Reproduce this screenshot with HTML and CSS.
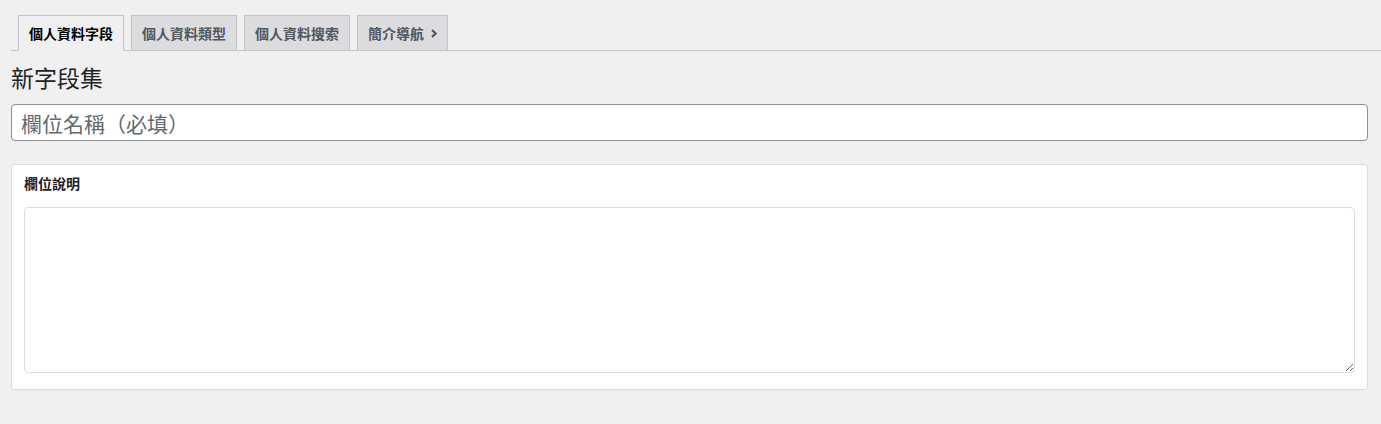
FILE: index.html
```html
<!DOCTYPE html>
<html lang="zh-Hant">
<head>
<meta charset="utf-8">
<title>新字段集</title>
<link rel="stylesheet" href="styles.css">
</head>
<body>
<div class="wrap">
  <nav class="tabs">
    <a class="tab tab-active" href="#">個人資料字段</a>
    <a class="tab" href="#">個人資料類型</a>
    <a class="tab" href="#">個人資料搜索</a>
    <a class="tab" href="#">簡介導航<svg class="chev" width="6" height="9" viewBox="0 0 6 9" aria-hidden="true"><path d="M1 1 L4.6 4.5 L1 8" fill="none" stroke="currentColor" stroke-width="2.2"/></svg></a>
  </nav>
  <h1 class="title">新字段集</h1>
  <input class="name-input" type="text" placeholder="欄位名稱（必填）">
  <div class="panel">
    <div class="panel-label">欄位說明</div>
    <textarea class="desc"></textarea>
  </div>
</div>
</body>
</html>
```
FILE: styles.css
```css
html, body {
  margin: 0;
  padding: 0;
  background: #f0f0f1;
  font-family: "Noto Sans CJK TC", "Noto Sans", "Liberation Sans", sans-serif;
  color: #1d2327;
}

.wrap {
  padding: 0 13px 0 11px;
}

.tabs {
  display: flex;
  align-items: flex-end;
  margin-right: -13px;
  padding-top: 15px;
  border-bottom: 1px solid #c3c4c7;
}

.tab {
  display: flex;
  align-items: center;
  gap: 7px;
  box-sizing: border-box;
  height: 36px;
  margin: 0 0 -1px 7px;
  padding: 0 10px;
  border: 1px solid #c3c4c7;
  background: #dcdcde;
  color: #50575e;
  font-size: 14px;
  font-weight: 700;
  line-height: 24px;
  text-decoration: none;
  white-space: nowrap;
}

.tab-active {
  background: #f0f0f1;
  border-bottom-color: #f0f0f1;
  color: #000;
}

.chev {
  display: block;
  margin-top: 1px;
}

.title {
  margin: 12px 0 12px 0;
  font-size: 23px;
  font-weight: 400;
  line-height: 29px;
  color: #1d2327;
}

.name-input {
  display: block;
  box-sizing: border-box;
  width: 100%;
  height: 37px;
  margin: 0;
  padding: 0 9px;
  border: 1px solid #8c8f94;
  border-radius: 4px;
  background: #fff;
  font-family: inherit;
  font-size: 21px;
  color: #2c3338;
  outline: none;
}

.name-input::placeholder {
  color: #646970;
}

.panel {
  box-sizing: border-box;
  margin-top: 23px;
  padding: 0 12px 16px;
  border: 1px solid #dcdcde;
  border-radius: 3px;
  background: #fff;
}

.panel-label {
  padding: 8px 0 14px;
  font-size: 14px;
  font-weight: 700;
  line-height: 20px;
  color: #1d2327;
}

.desc {
  display: block;
  box-sizing: border-box;
  width: 100%;
  height: 166px;
  margin: 0;
  padding: 6px 8px;
  border: 1px solid #dcdcde;
  border-radius: 4px;
  background: #fff;
  font-family: inherit;
  font-size: 14px;
  outline: none;
}
```
